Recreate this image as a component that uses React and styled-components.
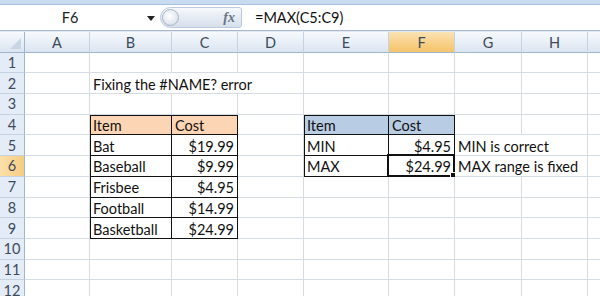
import React from "react";
import styled, { createGlobalStyle, css } from "styled-components";

const GlobalStyle = createGlobalStyle`
    body {
        margin: 0;
        font-family: Lato, "Liberation Sans", sans-serif;
    }
`

const Window = styled.div`
    width: 600px;
    height: 296px;
    overflow: hidden;
    background: #fff;
`

const TopStrip = styled.div`
    height: 4px;
    background: #c9dbf1;
    border-bottom: 1px solid #a7c0df;
`

const FormulaBar = styled.div`
    display: flex;
    align-items: center;
    height: 25px;
    background: #fff;
    border-bottom: 1px solid #a9b8cb;
`

const NameBox = styled.div`
    position: relative;
    width: 160px;
    height: 100%;
    display: flex;
    align-items: center;
    justify-content: center;
    font-size: 14.5px;
    color: #222;
    padding-right: 20px;
    box-sizing: border-box;
`

const DropArrow = styled.span`
    position: absolute;
    right: 5px;
    top: 11px;
    width: 0;
    height: 0;
    border-left: 4px solid transparent;
    border-right: 4px solid transparent;
    border-top: 5px solid #222;
`

const FxPill = styled.div`
    display: flex;
    align-items: center;
    justify-content: space-between;
    width: 82px;
    height: 21px;
    box-sizing: border-box;
    border: 1px solid #bccadb;
    border-radius: 11px 3px 3px 11px;
    background: linear-gradient(#f7f9fc, #e3eaf3 55%, #d6e0ec);
    padding-right: 6px;
`

const PillKnob = styled.span`
    width: 17px;
    height: 17px;
    margin-left: 1px;
    border-radius: 50%;
    border: 1px solid #a9b6c6;
    box-sizing: border-box;
    background: radial-gradient(circle at 45% 40%, #ffffff, #e3e9f0 60%, #c3ccd7);
`

const FxLabel = styled.span`
    font-family: "Liberation Serif", serif;
    font-style: italic;
    font-weight: bold;
    font-size: 14px;
    color: #6a7484;
`

const FormulaInput = styled.div`
    flex: 1;
    height: 100%;
    display: flex;
    align-items: center;
    padding-left: 10px;
    margin-left: 3px;
    font-size: 14.5px;
    color: #111;
`

const Gap = styled.div`
    height: 1px;
    background: #dfe7f1;
`

const Sheet = styled.div`
    display: grid;
    grid-template-columns: 25px 65px 82px 66px 66px 85px 66px 67px 66px 66px;
    grid-auto-rows: 20.7px;
`

const ColHead = styled.div`
    height: 21px;
    display: flex;
    align-items: center;
    justify-content: center;
    box-sizing: border-box;
    border-right: 1px solid #c5d2e2;
    border-bottom: 1px solid #9eb6ce;
    font-size: 14.5px;
    color: #3d4a5a;
    background: ${p => p.$active
        ? "linear-gradient(#fbe3b4, #f8cf85 60%, #f5c36c)"
        : "linear-gradient(#f6f9fd, #e6edf6 60%, #dae4f0)"};
`

const Corner = styled(ColHead)`
    position: relative;
    border-right: 1px solid #9eb6ce;
`

const CornerMark = styled.span`
    position: absolute;
    right: 3px;
    bottom: 3px;
    width: 0;
    height: 0;
    border-left: 11px solid transparent;
    border-bottom: 11px solid #c8d5e4;
`

const RowHead = styled.div`
    display: flex;
    align-items: center;
    justify-content: center;
    box-sizing: border-box;
    border-right: 1px solid #9eb6ce;
    border-bottom: 1px solid #c5d2e2;
    font-size: 14.5px;
    color: #3d4a5a;
    background: ${p => p.$active
        ? "linear-gradient(90deg, #fbe0aa, #f7cc80)"
        : "#e4ecf7"};
`

const Cell = styled.div`
    position: relative;
    display: flex;
    align-items: center;
    justify-content: ${p => (p.$num ? "flex-end" : "flex-start")};
    padding: 2px 3px 0 3px;
    box-sizing: border-box;
    white-space: nowrap;
    font-size: 14.5px;
    color: #111;
    grid-column: span ${p => p.$span || 1};
    background: ${p => p.$fill || "#fff"};
    border-right: 1px solid #d5dce6;
    border-bottom: 1px solid #d5dce6;
    ${p => p.$boxed && css`
        border-right-color: #111;
        border-bottom-color: #111;
    `}
    ${p => (p.$top || p.$left) && css`
        box-shadow: ${[
            p.$top ? "inset 0 1px 0 #111" : null,
            p.$left ? "inset 1px 0 0 #111" : null,
        ].filter(Boolean).join(", ")};
    `}
`

const Selection = styled.span`
    position: absolute;
    left: -2px;
    top: -2px;
    right: -1px;
    bottom: -1px;
    border: 2px solid #111;
    pointer-events: none;
`

const Handle = styled.span`
    position: absolute;
    right: -4px;
    bottom: -4px;
    width: 5px;
    height: 5px;
    background: #111;
    border: 1px solid #fff;
`

// column I only peeks in at the right edge, so its letter stays hidden
const columns = ["A", "B", "C", "D", "E", "F", "G", "H", "I"];
const visibleLabels = ["A", "B", "C", "D", "E", "F", "G", "H"];
const PEACH = "#fcd5b4";
const BLUE = "#b8cce4";

const cells = {
    B2: { text: "Fixing the #NAME? error", span: 3 },
    B4: { text: "Item", fill: PEACH, boxed: true, top: true, left: true },
    C4: { text: "Cost", fill: PEACH, boxed: true, top: true },
    B5: { text: "Bat", boxed: true, left: true },
    C5: { text: "$19.99", num: true, boxed: true },
    B6: { text: "Baseball", boxed: true, left: true },
    C6: { text: "$9.99", num: true, boxed: true },
    B7: { text: "Frisbee", boxed: true, left: true },
    C7: { text: "$4.95", num: true, boxed: true },
    B8: { text: "Football", boxed: true, left: true },
    C8: { text: "$14.99", num: true, boxed: true },
    B9: { text: "Basketball", boxed: true, left: true },
    C9: { text: "$24.99", num: true, boxed: true },
    E4: { text: "Item", fill: BLUE, boxed: true, top: true, left: true },
    F4: { text: "Cost", fill: BLUE, boxed: true, top: true },
    E5: { text: "MIN", boxed: true, left: true },
    F5: { text: "$4.95", num: true, boxed: true },
    G5: { text: "MIN is correct", span: 2 },
    E6: { text: "MAX", boxed: true, left: true },
    F6: { text: "$24.99", num: true, boxed: true },
    G6: { text: "MAX range is fixed", span: 2 },
};

const activeCol = "F";
const activeRow = 6;

const renderRow = (row) => {
    const out = [
        <RowHead key={`h${row}`} $active={row === activeRow}>{row}</RowHead>,
    ];
    let skip = 0;
    columns.forEach(col => {
        if (skip > 0) {
            skip--;
            return;
        }
        const ref = `${col}${row}`;
        const c = cells[ref] || {};
        if (c.span) skip = c.span - 1;
        out.push(
            <Cell
                key={ref}
                $span={c.span}
                $fill={c.fill}
                $num={c.num}
                $boxed={c.boxed}
                $top={c.top}
                $left={c.left}
            >
                {c.text}
                {col === activeCol && row === activeRow && (
                    <Selection><Handle /></Selection>
                )}
            </Cell>
        );
    });
    return out;
}

const App = () => {
    const rows = Array.from({ length: 12 }, (_, i) => i + 1);

    return (<Window>
        <GlobalStyle />
        <TopStrip />
        <FormulaBar>
            <NameBox>F6<DropArrow /></NameBox>
            <FxPill>
                <PillKnob />
                <FxLabel>fx</FxLabel>
            </FxPill>
            <FormulaInput>=MAX(C5:C9)</FormulaInput>
        </FormulaBar>
        <Gap />
        <Sheet>
            <Corner><CornerMark /></Corner>
            {columns.map(col => (
                <ColHead key={col} $active={col === activeCol}>
                    {visibleLabels.includes(col) ? col : null}
                </ColHead>
            ))}
            {rows.map(renderRow)}
        </Sheet>
    </Window>)
}

export default App;
